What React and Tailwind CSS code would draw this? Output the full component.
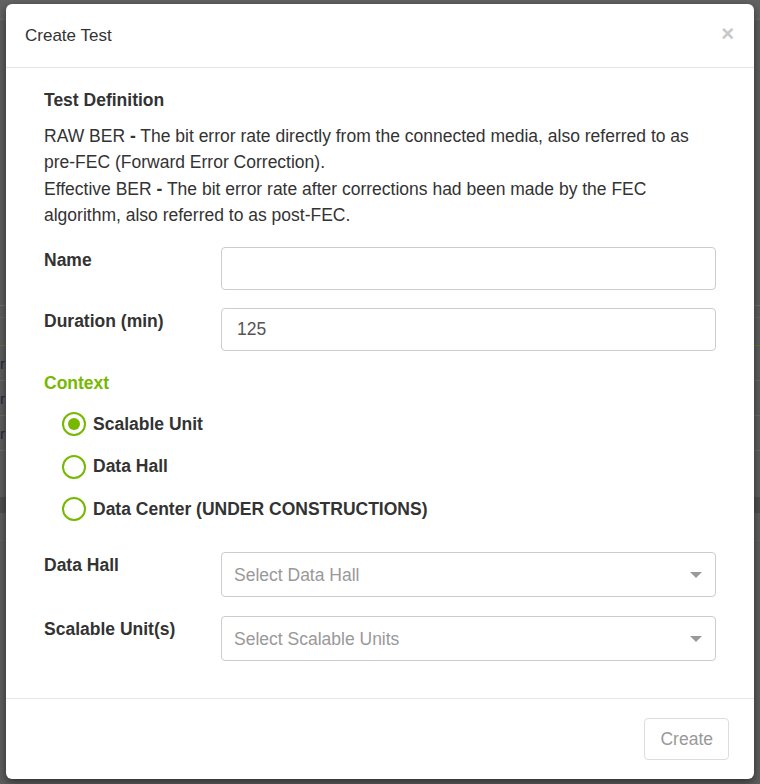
import React, { useState } from 'react';

const font = { fontFamily: '"Liberation Sans", Arial, sans-serif' };

// Page content peeking out from behind the dimmed overlay
const Backdrop = () => (
  <div className="absolute inset-0 bg-[#5d5d5d]">
    <div className="h-[20px] bg-[#626262] border-b border-[#6a6a6a]" />
    <div className="absolute left-0 right-0 top-[305px] border-t border-[#6e6e6e]" />
    <div className="absolute left-0 right-0 top-[317px] border-t border-[#666]" />
    <div className="absolute left-0 right-0 top-[345px] border-t border-[#5f7a2a]" />
    {[380, 415, 450].map((y) => (
      <div key={y} className="absolute left-0 right-0 border-t border-[#6a6a6a]" style={{ top: y }} />
    ))}
    {[362, 397, 432].map((y) => (
      <div key={y} className="absolute left-0 text-[15px] text-[#1c2a40]" style={{ top: y - 9 }}>r</div>
    ))}
    <div className="absolute left-0 right-0 top-[497px] h-[16px] bg-[#4e4e4e]" />
    <div className="absolute left-0 right-0 top-[540px] border-t border-[#636363]" />
  </div>
);

const Radio = ({ checked, label, onClick }) => (
  <label className="flex items-center gap-[7px] cursor-pointer" onClick={onClick}>
    <span className="w-[24px] h-[24px] rounded-full border-2 border-[#76b900] flex items-center justify-center">
      {checked && <span className="w-[12px] h-[12px] rounded-full bg-[#76b900]" />}
    </span>
    <span className="text-[17.5px] leading-none font-bold text-[#333]">{label}</span>
  </label>
);

const Caret = () => (
  <svg width="12" height="6" viewBox="0 0 12 6" className="absolute right-[13px] top-1/2 -translate-y-1/2">
    <path d="M0 0 L12 0 L6 6 Z" fill="#999" />
  </svg>
);

export default function App() {
  const [context, setContext] = useState('su');

  return (
    <div className="relative w-[760px] h-[784px] overflow-hidden" style={font}>
      <Backdrop />

      <div className="absolute left-[6px] top-[4px] w-[748px] h-[775px] bg-white rounded-[6px] shadow-[0_3px_9px_rgba(0,0,0,0.5)] flex flex-col">
        {/* header */}
        <div className="h-[64px] flex items-center justify-between pl-[19px] pr-[20px] border-b border-[#e5e5e5]">
          <h4 className="text-[17px] text-[#333]">Create Test</h4>
          <span className="text-[22px] font-bold text-[#c8c8c8] leading-none mt-[-4px]">×</span>
        </div>

        {/* body */}
        <div className="flex-1 px-[38px] pt-[20px]">
          <h5 className="text-[17.5px] font-bold text-[#333] leading-[24px]">Test Definition</h5>
          <div className="mt-[11px] text-[17.5px] leading-[26.3px] text-[#333]">
            <p>
              RAW BER <b>-</b> The bit error rate directly from the connected media, also referred to as
              pre-FEC (Forward Error Correction).
            </p>
            <p>
              Effective BER <b>-</b> The bit error rate after corrections had been made by the FEC
              algorithm, also referred to as post-FEC.
            </p>
          </div>

          <div className="mt-[19px] flex">
            <label className="w-[177px] text-[17.5px] font-bold text-[#333]">Name</label>
            <input
              className="flex-1 h-[43px] rounded-[4px] border border-[#ccc] px-[15px] text-[17.5px] text-[#555] outline-none"
              defaultValue=""
            />
          </div>

          <div className="mt-[18px] flex">
            <label className="w-[177px] text-[17.5px] font-bold text-[#333]">Duration (min)</label>
            <input
              className="flex-1 h-[43px] rounded-[4px] border border-[#ccc] px-[15px] text-[17.5px] text-[#555] outline-none"
              defaultValue="125"
            />
          </div>

          <div className="mt-[19px] text-[17.5px] font-bold text-[#76b900]">Context</div>

          <div className="mt-[16px] pl-[18px] flex flex-col gap-[18.5px]">
            <Radio checked={context === 'su'} label="Scalable Unit" onClick={() => setContext('su')} />
            <Radio checked={context === 'dh'} label="Data Hall" onClick={() => setContext('dh')} />
            <Radio
              checked={context === 'dc'}
              label="Data Center (UNDER CONSTRUCTIONS)"
              onClick={() => setContext('dc')}
            />
          </div>

          <div className="mt-[31px] flex">
            <label className="w-[177px] text-[17.5px] font-bold text-[#333]">Data Hall</label>
            <div className="relative flex-1 h-[45px] rounded-[4px] border border-[#ccc] flex items-center px-[12px] text-[17.5px] text-[#999]">
              Select Data Hall
              <Caret />
            </div>
          </div>

          <div className="mt-[19px] flex">
            <label className="w-[177px] text-[17.5px] font-bold text-[#333]">Scalable Unit(s)</label>
            <div className="relative flex-1 h-[45px] rounded-[4px] border border-[#ccc] flex items-center px-[12px] text-[17.5px] text-[#999]">
              Select Scalable Units
              <Caret />
            </div>
          </div>
        </div>

        {/* footer */}
        <div className="h-[81px] border-t border-[#e5e5e5] flex items-center justify-end pr-[25px]">
          <button
            disabled
            className="h-[42px] px-[15px] rounded-[4px] border border-[#ddd] text-[17.5px] text-[#999] bg-white"
          >
            Create
          </button>
        </div>
      </div>
    </div>
  );
}
